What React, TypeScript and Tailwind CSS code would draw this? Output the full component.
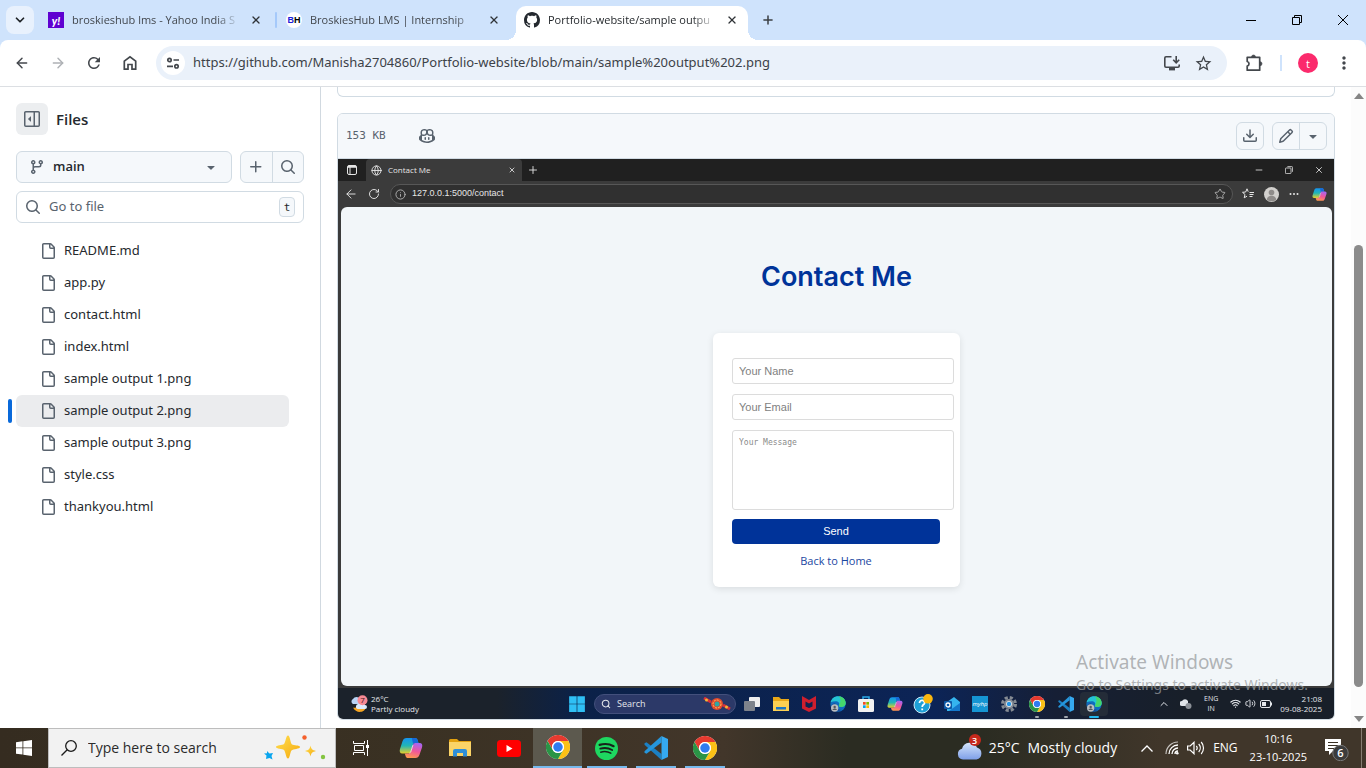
import React from "react";
import {
  ArrowLeft,
  ArrowRight,
  ChevronDown,
  ChevronUp,
  Globe,
  Info,
  Minus,
  Plus,
  RotateCw,
  Search,
  Star,
  Volume2,
  Wifi,
  X,
} from "lucide-react";
import { MdMoreVert, MdRefresh, MdStarBorder } from "react-icons/md";

type IconProps = { className?: string };

/* ---------- Octicons ---------- */

function Oct({ d, className = "size-4" }: { d: string; className?: string }) {
  return (
    <svg viewBox="0 0 16 16" fill="currentColor" className={`shrink-0 ${className}`} aria-hidden="true">
      <path d={d} />
    </svg>
  );
}

const oct = {
  sidebar:
    "m4.177 7.823 2.396-2.396A.25.25 0 0 1 7 5.604v4.792a.25.25 0 0 1-.427.177L4.177 8.177a.25.25 0 0 1 0-.354ZM0 1.75C0 .784.784 0 1.75 0h12.5C15.216 0 16 .784 16 1.75v12.5A1.75 1.75 0 0 1 14.25 16H1.75A1.75 1.75 0 0 1 0 14.25Zm1.75-.25a.25.25 0 0 0-.25.25v12.5c0 .138.112.25.25.25H9.5v-13Zm12.5 13a.25.25 0 0 0 .25-.25V1.75a.25.25 0 0 0-.25-.25H11v13Z",
  file: "M2 1.75C2 .784 2.784 0 3.75 0h6.586c.464 0 .909.184 1.237.513l2.914 2.914c.329.328.513.773.513 1.237v9.586A1.75 1.75 0 0 1 13.25 16h-9.5A1.75 1.75 0 0 1 2 14.25Zm1.75-.25a.25.25 0 0 0-.25.25v12.5c0 .138.112.25.25.25h9.5a.25.25 0 0 0 .25-.25V6h-2.75A1.75 1.75 0 0 1 9 4.25V1.5Zm6.75.062V4.25c0 .138.112.25.25.25h2.688l-.011-.013-2.914-2.914-.013-.011Z",
  branch:
    "M9.5 3.25a2.25 2.25 0 1 1 3 2.122V6A2.5 2.5 0 0 1 10 8.5H6a1 1 0 0 0-1 1v1.128a2.251 2.251 0 1 1-1.5 0V5.372a2.25 2.25 0 1 1 1.5 0v1.836A2.493 2.493 0 0 1 6 7h4a1 1 0 0 0 1-1v-.628A2.25 2.25 0 0 1 9.5 3.25Zm-6 0a.75.75 0 1 0 1.5 0 .75.75 0 0 0-1.5 0Zm8.25-.75a.75.75 0 1 0 0 1.5.75.75 0 0 0 0-1.5ZM4.25 12a.75.75 0 1 0 0 1.5.75.75 0 0 0 0-1.5Z",
  search:
    "M10.68 11.74a6 6 0 0 1-7.922-8.982 6 6 0 0 1 8.982 7.922l3.04 3.04a.749.749 0 0 1-.326 1.275.749.749 0 0 1-.734-.215ZM11.5 7a4.499 4.499 0 1 0-8.997 0A4.499 4.499 0 0 0 11.5 7Z",
  plus: "M7.75 2a.75.75 0 0 1 .75.75V7h4.25a.75.75 0 0 1 0 1.5H8.5v4.25a.75.75 0 0 1-1.5 0V8.5H2.75a.75.75 0 0 1 0-1.5H7V2.75A.75.75 0 0 1 7.75 2Z",
  triangle: "m4.427 7.427 3.396 3.396a.25.25 0 0 0 .354 0l3.396-3.396A.25.25 0 0 0 11.396 7H4.604a.25.25 0 0 0-.177.427Z",
  download:
    "M2.75 14A1.75 1.75 0 0 1 1 12.25v-2.5a.75.75 0 0 1 1.5 0v2.5c0 .138.112.25.25.25h10.5a.25.25 0 0 0 .25-.25v-2.5a.75.75 0 0 1 1.5 0v2.5A1.75 1.75 0 0 1 13.25 14ZM7.25 7.689V2a.75.75 0 0 1 1.5 0v5.689l1.97-1.969a.749.749 0 1 1 1.06 1.06l-3.25 3.25a.749.749 0 0 1-1.06 0L4.22 6.78a.749.749 0 1 1 1.06-1.06l1.97 1.969Z",
  pencil:
    "M11.013 1.427a1.75 1.75 0 0 1 2.474 0l1.086 1.086a1.75 1.75 0 0 1 0 2.474l-8.61 8.61c-.21.21-.47.364-.756.445l-3.251.93a.75.75 0 0 1-.927-.928l.929-3.25c.081-.286.235-.547.445-.758l8.61-8.61Zm.176 4.823L9.75 4.81l-6.286 6.287a.253.253 0 0 0-.064.108l-.558 1.953 1.953-.558a.253.253 0 0 0 .108-.064Zm1.238-3.763a.25.25 0 0 0-.354 0L10.811 3.75l1.439 1.44 1.263-1.263a.25.25 0 0 0 0-.354Z",
  copilot:
    "M7.998 15.035c-4.562 0-7.873-2.914-7.998-3.749V9.338c.085-.628.677-1.686 1.588-2.065.013-.07.024-.143.036-.218.029-.183.06-.384.126-.612-.201-.508-.254-1.084-.254-1.656 0-.87.128-1.769.693-2.484.579-.733 1.494-1.124 2.724-1.261 1.206-.134 2.262.034 2.944.765.05.053.096.108.139.165.044-.057.094-.112.143-.165.682-.731 1.738-.899 2.944-.765 1.23.137 2.145.528 2.724 1.261.566.715.693 1.614.693 2.484 0 .572-.053 1.148-.254 1.656.066.228.098.429.126.612.012.076.024.148.037.218.924.385 1.522 1.471 1.591 2.095v1.872c0 .766-3.351 3.795-8.002 3.795Zm0-1.485c2.28 0 4.584-1.11 5.002-1.433V7.862l-.023-.116c-.49.21-1.075.291-1.727.291-1.146 0-2.059-.327-2.71-.991A3.222 3.222 0 0 1 8 6.303a3.24 3.24 0 0 1-.544.743c-.65.664-1.563.991-2.71.991-.652 0-1.236-.081-1.727-.291l-.023.116v4.255c.419.323 2.722 1.433 5.002 1.433ZM6.762 2.83c-.193-.206-.637-.413-1.682-.297-1.019.113-1.479.404-1.713.7-.247.312-.369.789-.369 1.554 0 .793.129 1.171.308 1.371.162.181.519.379 1.442.379.853 0 1.339-.235 1.638-.54.315-.322.527-.827.617-1.553.117-.935-.037-1.395-.241-1.614Zm4.155-.297c-1.044-.116-1.488.091-1.681.297-.204.219-.359.679-.242 1.614.091.726.303 1.231.618 1.553.299.305.784.54 1.638.54.922 0 1.28-.198 1.442-.379.179-.2.308-.578.308-1.371 0-.765-.123-1.242-.37-1.554-.233-.296-.693-.587-1.713-.7ZM6.25 9.037a.75.75 0 0 1 .75.75v1.501a.75.75 0 0 1-1.5 0V9.787a.75.75 0 0 1 .75-.75Zm4.25.75v1.501a.75.75 0 0 1-1.5 0V9.787a.75.75 0 0 1 1.5 0Z",
  github:
    "M8 0c4.42 0 8 3.58 8 8a8.013 8.013 0 0 1-5.45 7.59c-.4.08-.55-.17-.55-.38 0-.27.01-1.13.01-2.2 0-.75-.25-1.23-.54-1.48 1.78-.2 3.65-.88 3.65-3.95 0-.88-.31-1.59-.82-2.15.08-.2.36-1.02-.08-2.12 0 0-.67-.22-2.2.82-.64-.18-1.32-.27-2-.27-.68 0-1.36.09-2 .27-1.53-1.03-2.2-.82-2.2-.82-.44 1.1-.16 1.92-.08 2.12-.51.56-.82 1.28-.82 2.15 0 3.06 1.86 3.75 3.64 3.95-.23.2-.44.55-.51 1.07-.46.21-1.61.55-2.33-.66-.15-.24-.6-.83-1.23-.82-.67.01-.27.38.01.53.34.19.73.9.82 1.13.16.45.68 1.31 2.69.94 0 .67.01 1.3.01 1.49 0 .21-.15.45-.55.38A7.995 7.995 0 0 1 0 8c0-4.42 3.58-8 8-8Z",
};

/* ---------- Application logos ---------- */

function ChromeLogo({ className }: IconProps) {
  return (
    <svg viewBox="0 0 48 48" className={className} aria-hidden="true">
      <circle cx="24" cy="24" r="24" fill="#fff" />
      <path d="M24 12h20.800A24 24 0 0 0 3.200 12l10.400 18A12 12 0 0 1 24 12z" fill="#e53a2f" />
      <path d="M34.400 30 24 48A24 24 0 0 0 44.800 12H24a12 12 0 0 1 10.400 18z" fill="#fbc116" />
      <path d="M13.600 30 3.200 12A24 24 0 0 0 24 48l10.400-18a12 12 0 0 1-20.800 0z" fill="#2a9446" />
      <circle cx="24" cy="24" r="12" fill="#fff" />
      <circle cx="24" cy="24" r="9.500" fill="#2f7cf0" />
    </svg>
  );
}

function CopilotLogo({ className }: IconProps) {
  return (
    <svg viewBox="0 0 24 22" className={className} aria-hidden="true">
      <defs>
        <linearGradient id="cpBlue" x1="0" y1="0" x2="0" y2="1">
          <stop offset="0" stopColor="#1593f0" />
          <stop offset=".5" stopColor="#22b6b4" />
          <stop offset="1" stopColor="#e8d02a" />
        </linearGradient>
        <linearGradient id="cpPink" x1=".6" y1="0" x2=".3" y2="1">
          <stop offset="0" stopColor="#a765f0" />
          <stop offset=".5" stopColor="#f0569a" />
          <stop offset="1" stopColor="#ff9a4d" />
        </linearGradient>
      </defs>
      <path d="M7.500 1h8.500c1.500 0 2.200.8 2.600 2.100L19.500 6h-3.200c-1.300 0-2 .8-2.400 2.100L12 14.200c-.5 1.500-1.300 2.300-2.800 2.300H3.400C1 16.500.2 14.500 1 12L3.600 4C4.300 2 5.600 1 7.500 1z" fill="url(#cpBlue)" />
      <path d="M12.800 1H16c1.500 0 2.200.8 2.600 2.100L19.500 6h-3.200c-1 0-1.700.5-2.100 1.300z" fill="#1668d8" />
      <path d="M16.500 21H9.200c-1.500 0-2.200-.8-2.600-2.100l-.8-2.400h3.400c1.500 0 2.300-.8 2.800-2.300l1.900-6.100c.4-1.300 1.100-2.100 2.400-2.100h4.300c2.400 0 3.200 2 2.400 4.500l-2.600 7.500c-.7 2-2 3-3.900 3z" fill="url(#cpPink)" />
      <path d="M13.900 8.100 12 14.200c-.3 1-.8 1.700-1.500 2" stroke="#fff" strokeOpacity=".75" strokeWidth="1" fill="none" />
    </svg>
  );
}

function FolderLogo({ className }: IconProps) {
  return (
    <svg viewBox="0 0 22 20" className={className} aria-hidden="true">
      <path d="M0 2.500Q0 1 1.500 1H8l2 2h12v15H0z" fill="#e3a10f" />
      <path d="M0 4h22v14H0z" fill="#fbd467" />
      <path d="M4 18.500V13q0-2 2-2h10q2 0 2 2v5.500h-4V15H8v3.500z" fill="#2f8fd8" />
    </svg>
  );
}

function YouTubeLogo({ className }: IconProps) {
  return (
    <svg viewBox="0 0 24 17" className={className} aria-hidden="true">
      <rect width="24" height="17" rx="3.500" fill="#f00" />
      <path d="M9.500 5v7l6-3.500z" fill="#fff" />
    </svg>
  );
}

function SpotifyLogo({ className }: IconProps) {
  return (
    <svg viewBox="0 0 24 24" className={className} aria-hidden="true">
      <circle cx="12" cy="12" r="12" fill="#1ed760" />
      <g fill="none" stroke="#17241b" strokeLinecap="round">
        <path d="M4.800 8.200c4.800-1.400 10.600-.9 14.600 1.400" strokeWidth="2.300" />
        <path d="M5.500 12.200c4.200-1.200 8.800-.7 12.400 1.300" strokeWidth="1.900" />
        <path d="M6 15.800c3.700-1 7.400-.6 10.500 1.100" strokeWidth="1.600" />
      </g>
    </svg>
  );
}

function CodeLogo({ className }: IconProps) {
  return (
    <svg viewBox="0 0 24 24" className={className} aria-hidden="true">
      <path d="M17.500 18 2.500 6.300.5 7.300v1.400L17.500 24z" fill="#1b80c4" />
      <path d="M17.500 0 .5 15.300v1.400l2 1L17.500 6.500z" fill="#2596dc" />
      <path d="M17.500 0 24 3v18l-6.500 3z" fill="#35a9f0" />
    </svg>
  );
}

function EdgeLogo({ className }: IconProps) {
  return (
    <svg viewBox="0 0 24 24" className={className} aria-hidden="true">
      <circle cx="12" cy="12" r="11.500" fill="#0f6cbd" />
      <path d="M1 9.500C2.500 3.500 7 .5 12 .5c7 0 11.500 5 11.500 10 0 4-3 6-6.500 6-3 0-4.500-1-3.500-2.500 1.500-3-1-6-5-6-3 0-5.500.5-7.500 1.500z" fill="#25c4d4" />
      <path d="M13 .5c6.500.5 10.500 5 10.500 10 0 4-3 6-6.500 6-3 0-4.500-1-3.500-2.500C16 10 17 4 13 .5z" fill="#45d66b" />
      <path d="M8 11c-2 6 3 10 9 9.500-5 4-13 2.500-15-4 0-3 2-5.500 6-5.500z" fill="#164a98" />
      <circle cx="7" cy="18" r="5.500" fill="#b8bcc0" />
      <circle cx="7" cy="16.500" r="1.800" fill="#53585e" />
      <path d="M3.800 21c.5-3 5.900-3 6.400 0z" fill="#53585e" />
    </svg>
  );
}

function WindowsLogo({ className }: IconProps) {
  return (
    <svg viewBox="0 0 16 16" className={className} fill="#fff" aria-hidden="true">
      <path d="M0 2.200 6.500 1.300v6.200H0zM7.300 1.200 16 0v7.500H7.300zM0 8.300h6.500v6.300L0 13.700zM7.300 8.300H16V16l-8.700-1.200z" />
    </svg>
  );
}

function TaskViewIcon({ className }: IconProps) {
  return (
    <svg viewBox="0 0 17 16" className={className} fill="none" stroke="#fff" aria-hidden="true">
      <path d="M.5 1v2.500h11V1M.5 15v-2.500h11V15M1.500 5.500h9v5h-9zM14.500 0v16" />
      <path d="M13 5h3v3h-3z" fill="#fff" stroke="none" />
    </svg>
  );
}

function CloudLogo({ className }: IconProps) {
  return (
    <svg viewBox="0 0 26 24" className={className} aria-hidden="true">
      <defs>
        <linearGradient id="cloudFill" x1="0" y1="0" x2="0" y2="1">
          <stop offset="0" stopColor="#d4e4fb" />
          <stop offset="1" stopColor="#7e9fe8" />
        </linearGradient>
      </defs>
      <path d="M6 23.500a5.500 5.500 0 0 1-1-10.800 8 8 0 0 1 15-1.200 6.200 6.200 0 0 1-.5 12z" fill="url(#cloudFill)" />
    </svg>
  );
}

function SparkleArt({ className }: IconProps) {
  return (
    <svg viewBox="0 0 64 28" className={className} aria-hidden="true">
      <defs>
        <linearGradient id="spark" x1="0" y1="0" x2="1" y2="1">
          <stop offset="0" stopColor="#ffdf52" />
          <stop offset="1" stopColor="#f5a90c" />
        </linearGradient>
      </defs>
      <path d="M25 1.500c2 0 2.500 8 4 9s8 .5 8 2.500-7 2-8.500 3.500-1.500 8-3.500 8-2.500-7-4-8.500-8-1-8-3 6.500-1.500 8-3 2-8.500 4-8.500z" fill="url(#spark)" />
      <path d="M47.500 11.500c.8 3.500 1.500 4.500 5.500 5.500-4 1-4.700 2-5.500 5.500-.8-3.500-1.500-4.500-5.500-5.500 4-1 4.700-2 5.500-5.500z" fill="url(#spark)" />
      <path d="m4 17 2.500 2.500L10 19l-1.500 3 1 3.500-3-1.500L3 25l.5-3.500L1 19.500l3-.3z" fill="#0aa5ee" />
      <circle cx="41.500" cy="3.500" r="2.200" fill="#f4602c" />
      <circle cx="60" cy="23" r="2.200" fill="#83c440" />
    </svg>
  );
}

/* ---------- Browser chrome ---------- */

function TabTitle({ children }: { children: React.ReactNode }) {
  return (
    <span className="min-w-0 flex-1 overflow-hidden text-[11px] whitespace-nowrap [mask-image:linear-gradient(to_right,black_86%,transparent)]">
      {children}
    </span>
  );
}

function CloseTab() {
  return (
    <button aria-label="Close tab" className="grid size-4 shrink-0 place-items-center text-[#2f3337]">
      <X className="size-3" strokeWidth={2.600} />
    </button>
  );
}

function TabStrip() {
  return (
    <div className="flex h-10 items-start bg-[#cfe3fc] pt-[6px] pl-[6px]">
      <button aria-label="Search tabs" className="mr-[6px] grid size-7 shrink-0 place-items-center rounded-lg bg-[#e8f1fd] text-[#1f2327]">
        <ChevronDown className="size-3.5" strokeWidth={3} />
      </button>
      <div className="flex gap-[6px]">
        <div className="relative flex h-7 w-[232px] items-center gap-2 px-2 text-[#42474d]">
          <span className="grid size-4 shrink-0 place-items-center bg-[#5f01d1] font-['Lato'] text-[11px] leading-none font-black text-white italic">y!</span>
          <TabTitle>broskieshub lms - Yahoo India S</TabTitle>
          <CloseTab />
          <span className="absolute top-[6px] -right-[5px] h-4 w-0.5 rounded bg-[#a5c9fa]" />
        </div>
        <div className="flex h-7 w-[232px] items-center gap-2 px-2 text-[#42474d]">
          <span className="grid size-4 shrink-0 place-items-center overflow-hidden rounded-full bg-white font-['Liberation_Sans'] text-[9px] leading-none font-bold text-black">
            <span>
              <span className="text-[#1c1cd8]">B</span>H
            </span>
          </span>
          <TabTitle>BroskiesHub LMS | Internship</TabTitle>
          <CloseTab />
        </div>
        <div className="relative flex h-[34px] w-[232px] items-start rounded-t-[10px] bg-white text-[#1f2327]">
          <span className="absolute bottom-0 -left-2.5 size-2.5 bg-[radial-gradient(circle_at_0_0,transparent_10px,white_10px)]" />
          <span className="absolute -right-2.5 bottom-0 size-2.5 bg-[radial-gradient(circle_at_100%_0,transparent_10px,white_10px)]" />
          <div className="flex h-7 w-full items-center gap-2 px-2">
            <Oct d={oct.github} className="size-4 text-[#24292f]" />
            <TabTitle>Portfolio-website/sample outpu</TabTitle>
            <CloseTab />
          </div>
        </div>
      </div>
      <button aria-label="New tab" className="ml-3 grid h-7 w-4 place-items-center text-[#3c4043]">
        <Plus className="size-3.5" strokeWidth={2.600} />
      </button>
      <div className="ml-auto flex h-7 text-black">
        <button aria-label="Minimize" className="grid w-[46px] place-items-center">
          <span className="h-px w-2.5 bg-black" />
        </button>
        <button aria-label="Restore" className="grid w-[46px] place-items-center">
          <svg viewBox="0 0 10 10" className="size-2.5" fill="none" stroke="currentColor">
            <path d="M.5 2.500h7v7h-7zM2.500 2.500v-2h7v7h-2" />
          </svg>
        </button>
        <button aria-label="Close" className="grid w-[46px] place-items-center">
          <svg viewBox="0 0 10 10" className="size-2.5" fill="none" stroke="currentColor">
            <path d="m0 0 10 10M10 0 0 10" />
          </svg>
        </button>
      </div>
    </div>
  );
}

function TuneIcon() {
  return (
    <svg viewBox="0 0 14 14" className="size-3.5" fill="none" stroke="#43474c" strokeWidth="1.700" aria-hidden="true">
      <circle cx="3.500" cy="4" r="1.700" />
      <path d="M7.500 4H13M1 10.300h6" />
      <circle cx="10.500" cy="10.300" r="1.700" />
    </svg>
  );
}

function InstallIcon() {
  return (
    <svg viewBox="0 0 16 16" className="size-4" fill="none" stroke="currentColor" strokeWidth="1.600" aria-hidden="true">
      <path d="M7.500 1.800H2Q.8 1.800.8 3v8q0 1.200 1.200 1.200h12q1.200 0 1.200-1.200V9.500" />
      <path d="M12.200 1v6M9.200 4.800l3 3 3-3" />
      <path d="M5 14.200h6" strokeWidth="2.400" />
    </svg>
  );
}

function ExtensionIcon() {
  return (
    <svg viewBox="0 0 18 18" className="size-[18px]" fill="none" stroke="currentColor" strokeWidth="1.700" strokeLinejoin="round" aria-hidden="true">
      <path d="M2.200 3.300h12.500v12.900H2.200v-4.200a2.300 2.300 0 0 0 0-4.500z" />
      <path d="M6.500 3a2 2 0 0 1 4 0zM15 7.700a2 2 0 0 1 0 4z" fill="currentColor" strokeWidth=".6" />
    </svg>
  );
}

function AddressBar() {
  return (
    <div className="bg-[#cfe3fc]">
      <div className="flex h-[47px] items-center rounded-t-lg border-b border-[#dcdfe3] bg-white pr-3 pl-3 text-[#43474c]">
        <div className="flex gap-4">
          <button aria-label="Back" className="grid size-5 place-items-center">
            <ArrowLeft className="size-4" strokeWidth={2.200} />
          </button>
          <button aria-label="Forward" className="grid size-5 place-items-center text-[#aeb1b5]">
            <ArrowRight className="size-4" strokeWidth={2.200} />
          </button>
          <button aria-label="Reload" className="grid size-5 place-items-center">
            <MdRefresh className="size-[18px]" />
          </button>
          <button aria-label="Home" className="grid size-5 place-items-center">
            <svg viewBox="0 0 16 16" className="size-4" fill="none" stroke="currentColor" strokeWidth="1.700" aria-hidden="true">
              <path d="M2.300 6.200 8 1.800l5.700 4.400v8H10V9.500H6v4.700H2.300z" />
            </svg>
          </button>
        </div>
        <div className="ml-4 flex h-[34px] min-w-0 flex-1 items-center rounded-full bg-[#eaf1fa] pr-5 pl-[5px]">
          <button aria-label="View site information" className="grid size-6 shrink-0 place-items-center rounded-full bg-white">
            <TuneIcon />
          </button>
          <input
            aria-label="Address"
            defaultValue="https://github.com/Manisha2704860/Portfolio-website/blob/main/sample%20output%202.png"
            className="ml-2 min-w-0 flex-1 bg-transparent font-['Noto_Sans'] text-[13px] text-[#3c4248] outline-none"
          />
          <button aria-label="Install app" className="mr-3.5 shrink-0">
            <InstallIcon />
          </button>
          <button aria-label="Bookmark this tab" className="-mr-1.5 shrink-0">
            <MdStarBorder className="size-[19px]" />
          </button>
        </div>
        <button aria-label="Extensions" className="ml-[15px] grid size-6 place-items-center">
          <ExtensionIcon />
        </button>
        <span className="ml-3.5 h-4 w-0.5 bg-[#cfe3fc]" />
        <button aria-label="Profile" className="ml-4 grid size-5 place-items-center rounded-full bg-[#fb2a6c] text-[11px] leading-none text-white">
          t
        </button>
        <button aria-label="Browser menu" className="ml-4 grid size-5 place-items-center">
          <MdMoreVert className="size-5" />
        </button>
      </div>
    </div>
  );
}

/* ---------- Repository sidebar ---------- */

const files = [
  "README.md",
  "app.py",
  "contact.html",
  "index.html",
  "sample output 1.png",
  "sample output 2.png",
  "sample output 3.png",
  "style.css",
  "thankyou.html",
];

function Sidebar() {
  return (
    <aside className="w-[321px] shrink-0 border-r border-[#d1d9e0] p-4 text-[#25292e]">
      <div className="flex items-center gap-2">
        <button aria-label="Collapse file tree" className="grid size-8 place-items-center rounded-md bg-[#eceef0] text-[#59636e]">
          <Oct d={oct.sidebar} />
        </button>
        <h2 className="text-[15px] font-semibold">Files</h2>
      </div>
      <div className="mt-4 flex gap-2">
        <button className="flex h-8 flex-1 items-center rounded-md border border-[#d1dbe3] bg-[#f5f8fb] px-3 text-[13px] font-semibold text-[#25292e]">
          <Oct d={oct.branch} className="mr-2 size-4 text-[#59636e]" />
          main
          <Oct d={oct.triangle} className="ml-auto size-4 text-[#59636e]" />
        </button>
        <div className="flex h-8 w-16 divide-x divide-[#d1dbe3] rounded-md border border-[#d1dbe3] bg-[#f5f8fb] text-[#59636e]">
          <button aria-label="Add file" className="grid flex-1 place-items-center">
            <Oct d={oct.plus} />
          </button>
          <button aria-label="Search this repository" className="grid flex-1 place-items-center">
            <Oct d={oct.search} />
          </button>
        </div>
      </div>
      <div className="mt-2 flex h-8 items-center rounded-md border border-[#d1dbe3] px-2 text-[#59636e]">
        <Oct d={oct.search} />
        <input
          aria-label="Go to file"
          placeholder="Go to file"
          className="ml-2 min-w-0 flex-1 font-['Noto_Sans'] text-[13px] outline-none placeholder:text-[#59636e]"
        />
        <kbd className="grid h-5 w-4 place-items-center rounded border border-[#d1dbe3] bg-[#f5f8fb] font-['DejaVu_Sans_Mono'] text-[11px] leading-none text-[#25292e]">
          t
        </kbd>
      </div>
      <nav aria-label="Files" className="mt-3 mr-[15px]">
        <ul>
          {files.map((name) => {
            const active = name === "sample output 2.png";
            return (
              <li key={name} className="relative">
                {active && <span className="absolute top-1 -left-2 h-6 w-1 rounded-full bg-[#0969da]" />}
                <a
                  href="#"
                  aria-current={active ? "page" : undefined}
                  className={`flex h-8 items-center gap-2 rounded-md pl-6 font-['Noto_Sans'] text-[13px] ${active ? "bg-[#ebecee]" : ""}`}
                >
                  <Oct d={oct.file} className="size-4 text-[#59636e]" />
                  {name}
                </a>
              </li>
            );
          })}
        </ul>
      </nav>
    </aside>
  );
}

/* ---------- Captured desktop shown in the preview ---------- */

function ContactForm() {
  return (
    <form className="flex w-[247px] flex-col rounded-md bg-white pt-[25px] pr-5 pb-[18px] pl-[19px] shadow-[0_2px_7px_rgba(0,0,0,0.1)]">
      <input
        aria-label="Your Name"
        placeholder="Your Name"
        className="h-[26px] w-[222px] rounded-[3px] border border-[#dcdcdc] px-1.5 font-['Liberation_Sans'] text-[11px] placeholder:text-[#7f7f7f]"
      />
      <input
        aria-label="Your Email"
        placeholder="Your Email"
        className="mt-2.5 h-[26px] w-[222px] rounded-[3px] border border-[#dcdcdc] px-1.5 font-['Liberation_Sans'] text-[11px] placeholder:text-[#7f7f7f]"
      />
      <textarea
        aria-label="Your Message"
        placeholder="Your Message"
        className="mt-2.5 h-20 w-[222px] resize-none rounded-[3px] border border-[#dcdcdc] px-1.5 py-1.5 font-['DejaVu_Sans_Mono'] text-[8px] placeholder:text-[#8a8a8a]"
      />
      <button type="button" className="mt-[9px] h-[25px] rounded bg-[#003399] font-['Liberation_Sans'] text-[11px] text-white">
        Send
      </button>
      <a href="#" className="mt-[9px] text-center text-[11px] leading-4 text-[#1a479f]">
        Back to Home
      </a>
    </form>
  );
}

function CapturedBrowser() {
  return (
    <div className="flex min-h-0 flex-1 flex-col bg-[#3b3b3b] text-[#e6e6e6]">
      <div className="flex h-[22px] shrink-0 items-center bg-[#202020]">
        <span className="grid h-full w-7 place-items-center">
          <svg viewBox="0 0 10 10" className="size-2.5" fill="none" stroke="currentColor">
            <rect x=".5" y=".5" width="9" height="9" rx="1.500" />
            <path d="M1 1.800h8" strokeWidth="2" />
            <path d="M3 2v7" />
          </svg>
        </span>
        <div className="flex h-full w-[156px] items-center rounded-t bg-[#3b3b3b] pr-1.5 pl-[5px] text-[8px]">
          <Globe className="mr-1.5 size-[11px]" />
          Contact Me
          <X className="ml-auto size-2" strokeWidth={2.500} />
        </div>
        <Plus className="ml-[5px] size-3" strokeWidth={1.800} />
        <div className="ml-auto flex items-center gap-[21px] pr-[10px]">
          <Minus className="size-[10px]" />
          <svg viewBox="0 0 10 10" className="size-2" fill="none" stroke="currentColor">
            <rect x=".5" y="2.500" width="7" height="7" rx="1" />
            <path d="M3 .8h5.500a1 1 0 0 1 1 1v5.500" />
          </svg>
          <X className="size-2.5" />
        </div>
      </div>
      <div className="flex h-[26px] shrink-0 items-center pr-[7px] pl-1.5">
        <ArrowLeft className="size-3.5" strokeWidth={1.600} />
        <RotateCw className="ml-2.5 size-3" strokeWidth={1.900} />
        <div className="ml-2.5 flex h-5 min-w-0 flex-1 items-center rounded-full border border-[#575757] bg-[#303030] pr-1.5 pl-1 text-[9px]">
          <Info className="mr-1.5 size-[11px] text-[#b5b5b5]" />
          <span className="font-['Liberation_Sans']">127.0.0.1:5000/contact</span>
          <Star className="ml-auto size-3 text-[#b5b5b5]" strokeWidth={1.800} />
        </div>
        <svg viewBox="0 0 12 12" className="ml-[9px] size-3" fill="none" stroke="currentColor" aria-hidden="true">
          <path d="m5 .8 1.200 2.900M5 .8 3.700 4l-3.200.3L3 6.500 2.200 9.800 5 8.200M7.500 4.500H12M7.500 6.500h4M7.500 8.500h3" />
        </svg>
        <svg viewBox="0 0 16 16" className="ml-2.5 size-[15px]" aria-hidden="true">
          <circle cx="8" cy="8" r="8" fill="#d2d0cd" />
          <circle cx="8" cy="5.800" r="3" fill="#8f8c8a" />
          <path d="M3 13.500c0-5.500 10-5.500 10 0-3 2.300-7 2.300-10 0z" fill="#8f8c8a" />
        </svg>
        <svg viewBox="0 0 10 10" className="ml-2.5 size-2.5" fill="currentColor" aria-hidden="true">
          <circle cx="1.500" cy="5" r="1" />
          <circle cx="5" cy="5" r="1" />
          <circle cx="8.500" cy="5" r="1" />
        </svg>
        <CopilotLogo className="ml-[13px] size-[15px]" />
      </div>
      <div className="mr-0.5 mb-0.5 ml-[3px] flex min-h-0 flex-1 flex-col items-center rounded-md bg-[#f2f6f9] pt-[50px]">
        <h1 className="mb-9 font-['Inter'] text-[27px] leading-10 font-semibold text-[#003399]">Contact Me</h1>
        <ContactForm />
      </div>
    </div>
  );
}

function Slot({ children, label, mark }: { children: React.ReactNode; label: string; mark?: "idle" | "active" }) {
  return (
    <span title={label} className={`relative grid h-6 w-7 place-items-center rounded ${mark === "active" ? "bg-[#242c38]" : ""}`}>
      {children}
      {mark && (
        <span className={`absolute -bottom-0.5 h-0.5 rounded ${mark === "active" ? "w-2.5 bg-[#22b8f0]" : "w-1 bg-[#a0a6ae]"}`} />
      )}
    </span>
  );
}

function CapturedTaskbar() {
  return (
    <div className="grid h-[31px] shrink-0 grid-cols-[1fr_auto_1fr] items-center bg-[linear-gradient(to_right,#1b222b_0%,#1b222b_16%,#0b2148_24%,#0c2456_60%,#161f35_72%,#181f29_85%)] text-[8px] text-[#e4e7eb]">
      <div className="flex items-center gap-[3px] pl-3">
        <svg viewBox="0 0 18 18" className="size-[18px]" aria-hidden="true">
          <path d="M3 12.500c3 1 5-1 5-3.500l8 3c-1 6-10 7-13 .5z" fill="#f6a623" />
          <path d="M3 9a2.800 2.800 0 0 1 0-5 4 4 0 0 1 7 0v5z" fill="#b9d4f5" />
          <path d="M8 14a2.500 2.500 0 0 1 1-5 3.500 3.500 0 0 1 6 1 2 2 0 0 1 0 4z" fill="#dcebfd" />
          <circle cx="12.500" cy="5.300" r="5" fill="#f88a94" />
          <text x="12.500" y="8.200" textAnchor="middle" fontSize="8" fill="#40151b">7</text>
        </svg>
        <div className="leading-[10px]">
          <div>26°C</div>
          <div>Partly cloudy</div>
        </div>
      </div>
      <div className="flex items-center pl-1">
        <svg viewBox="0 0 16 16" className="mr-2 size-[18px]" fill="#2fc0f5" aria-hidden="true">
          <path d="M1 1h6.700v6.700H1zM8.300 1H15v6.700H8.300zM1 8.300h6.700V15H1zM8.300 8.300H15V15H8.300z" />
        </svg>
        <div className="flex h-5 w-[142px] items-center rounded-full border border-[#43507c] bg-[#2c3968] pr-1 pl-1.5 text-[9px]">
          <Search className="mr-1.5 size-2.5" strokeWidth={2.500} />
          Search
          <svg viewBox="0 0 28 14" className="ml-auto h-3.5 w-7" aria-hidden="true">
            <path d="M1 1 8 5M20 8l7 4" stroke="#d8313a" strokeWidth="3" />
            <circle cx="3.500" cy="3" r="1.500" fill="#f7b733" />
            <circle cx="23.500" cy="10" r="1.500" fill="#f7b733" />
            <circle cx="14" cy="7" r="6" fill="#e3482d" />
            <circle cx="14" cy="7" r="4" fill="none" stroke="#ffc45c" strokeDasharray="2 1" />
            <circle cx="14" cy="7" r="2.500" fill="#2fa8a3" />
          </svg>
        </div>
        <div className="ml-0.5 flex w-[370px] justify-between">
          <Slot label="Task view">
            <svg viewBox="0 0 16 14" className="size-4" aria-hidden="true">
              <rect x="5" width="11" height="10" rx="1" fill="#eee" />
              <rect y="4" width="11" height="10" rx="1" fill="#7e838b" />
            </svg>
          </Slot>
          <Slot label="Files">
            <svg viewBox="0 0 16 14" className="size-4" aria-hidden="true">
              <path d="M0 0h6l2 2h8v12H0z" fill="#e9a818" />
              <path d="M0 4h16v10H0z" fill="#fcd052" />
              <path d="M3 10h10v2.500H3z" fill="#1b75c4" />
            </svg>
          </Slot>
          <Slot label="Antivirus">
            <svg viewBox="0 0 14 16" className="h-4 w-3.5" aria-hidden="true">
              <path d="m0 0 7 4 7-4v12.500L7 16l-7-3.500zM3.500 5.500v5L7 12l3.500-1.500v-5L7 7.500z" fill="#cf1f2e" fillRule="evenodd" />
            </svg>
          </Slot>
          <Slot label="Edge">
            <EdgeLogo className="size-4" />
          </Slot>
          <Slot label="Store">
            <svg viewBox="0 0 16 16" className="size-4" aria-hidden="true">
              <path d="M5 4V1h6v3" fill="none" stroke="#2aa9e8" strokeWidth="1.500" />
              <rect y="3" width="16" height="13" rx="1.500" fill="#f1f1f1" />
              <path d="M5 6h2.700v2.700H5z" fill="#f25022" />
              <path d="M8.300 6H11v2.700H8.300z" fill="#7fba00" />
              <path d="M5 9.300h2.700V12H5z" fill="#00a4ef" />
              <path d="M8.300 9.300H11V12H8.300z" fill="#ffb900" />
            </svg>
          </Slot>
          <Slot label="Copilot">
            <CopilotLogo className="size-4" />
          </Slot>
          <Slot label="Help">
            <svg viewBox="0 0 20 20" className="size-5" aria-hidden="true">
              <circle cx="9" cy="11" r="8" fill="#1e9fd6" stroke="#cfeaf7" />
              <path d="M6.500 9c0-4 6-3 5 .3-.6 1.400-2.300 1.500-2.300 3.700m0 1.500v1.800" fill="none" stroke="#fff" strokeWidth="1.800" />
              <circle cx="15" cy="4.800" r="4.800" fill="#fbb80f" />
            </svg>
          </Slot>
          <Slot label="Outlook">
            <svg viewBox="0 0 16 16" className="size-4" aria-hidden="true">
              <path d="m3 6 7-5 6 5v9H3z" fill="#35b5ef" />
              <path d="m5 15 11-8v8z" fill="#1479cc" />
              <rect y="5" width="8" height="8" rx="1" fill="#0d5aa8" />
              <circle cx="4" cy="9" r="2" fill="none" stroke="#fff" strokeWidth="1.300" />
            </svg>
          </Slot>
          <Slot label="myHP">
            <span className="grid size-4 place-items-center bg-[#1595d3] text-[6px] leading-none text-white italic">myhp</span>
          </Slot>
          <Slot label="Settings">
            <svg viewBox="0 0 16 16" className="size-4" aria-hidden="true">
              <circle cx="8" cy="8" r="6.500" fill="none" stroke="#858b93" strokeWidth="3" strokeDasharray="3.100 2" />
              <circle cx="8" cy="8" r="5" fill="#858b93" />
              <circle cx="8" cy="8" r="2.700" fill="#2496e8" stroke="#d6dade" />
            </svg>
          </Slot>
          <Slot label="Chrome" mark="idle">
            <ChromeLogo className="size-4" />
          </Slot>
          <Slot label="Code" mark="idle">
            <CodeLogo className="size-4" />
          </Slot>
          <Slot label="Edge" mark="active">
            <EdgeLogo className="size-4" />
          </Slot>
        </div>
      </div>
      <div className="flex items-center justify-end pr-3">
        <ChevronUp className="size-3" />
        <svg viewBox="0 0 12 10" className="ml-2.5 h-2.5 w-3" aria-hidden="true">
          <path d="M2 7a2.500 2.500 0 0 1 0-5 3.500 3.500 0 0 1 6 0v5z" fill="#dfe3e8" />
          <circle cx="8.500" cy="7" r="3" fill="#8b9097" />
        </svg>
        <div className="ml-3 text-center text-[7px] leading-[10px]">
          ENG
          <br />
          IN
        </div>
        <Wifi className="ml-3 size-[11px]" strokeWidth={2.500} />
        <Volume2 className="ml-1 size-[11px]" />
        <svg viewBox="0 0 12 8" className="ml-1 h-2 w-3" aria-hidden="true">
          <rect x=".5" y=".5" width="10" height="7" rx="1.500" fill="none" stroke="#e4e7eb" />
          <path d="M2 2h4v4H2zM11 2.500h1v3h-1z" fill="#e4e7eb" />
        </svg>
        <div className="ml-2 text-right leading-[10px]">
          21:08
          <br />
          09-08-2025
        </div>
      </div>
    </div>
  );
}

function FileView() {
  return (
    <main className="flex min-w-0 flex-1 flex-col px-4 pb-2">
      <div className="h-2.5 shrink-0 rounded-b-md border border-t-0 border-[#d1dbe3]" />
      <section className="mt-4 flex min-h-0 flex-1 flex-col overflow-hidden rounded-md border border-[#d1dbe3]">
        <header className="flex h-[45px] shrink-0 items-center border-b border-[#d1dbe3] bg-[#f5f8fb] pr-[7px] pl-2 text-[#59636e]">
          <span className="font-['DejaVu_Sans_Mono'] text-[11px]">153 KB</span>
          <button aria-label="Copilot" className="ml-[33px]">
            <Oct d={oct.copilot} />
          </button>
          <button aria-label="Download raw file" className="ml-auto grid size-7 place-items-center rounded-md border border-[#d1dbe3]">
            <Oct d={oct.download} />
          </button>
          <div className="ml-2 flex h-7 w-[55px] divide-x divide-[#d1dbe3] rounded-md border border-[#d1dbe3]">
            <button aria-label="Edit this file" className="grid flex-1 place-items-center">
              <Oct d={oct.pencil} />
            </button>
            <button aria-label="More edit options" className="grid flex-1 place-items-center">
              <Oct d={oct.triangle} />
            </button>
          </div>
        </header>
        <CapturedBrowser />
        <CapturedTaskbar />
      </section>
    </main>
  );
}

function PageScrollbar() {
  return (
    <div className="flex w-[15px] shrink-0 flex-col items-center bg-[#fcfcfc] py-1.5" aria-hidden="true">
      <svg viewBox="0 0 10 6" className="h-1.5 w-2.5" fill="#858585">
        <path d="M5 0 10 6H0z" />
      </svg>
      <div className="mt-[146px] mb-[29px] w-[9px] flex-1 rounded-full bg-[#8b8b8b]" />
      <svg viewBox="0 0 10 6" className="h-1.5 w-2.5" fill="#858585">
        <path d="M0 0h10L5 6z" />
      </svg>
    </div>
  );
}

/* ---------- Desktop taskbar ---------- */

function AppButton({ label, children, state }: { label: string; children: React.ReactNode; state?: "open" | "focused" }) {
  const look =
    state === "focused" ? "bg-[#5c594e] border-b-2 border-[#76b9ed]" : "";
  return (
    <button aria-label={label} className={`relative grid h-10 w-[49px] place-items-center ${look}`}>
      {children}
      {state === "open" && <span className="absolute bottom-0 h-0.5 w-10 bg-[#76b9ed]" />}
    </button>
  );
}

function Taskbar() {
  return (
    <footer className="flex h-10 shrink-0 items-center bg-[linear-gradient(to_right,#352c20_0%,#3a3123_30%,#42362a_53%,#2b2c22_62%,#2b2c22_72%,#40362a_85%,#40362a_100%)] text-white">
      <button aria-label="Start" className="grid h-10 w-12 place-items-center">
        <WindowsLogo className="size-4" />
      </button>
      <div className="mr-px flex h-10 w-[288px] items-center border border-[#bdbdbd] bg-[#f2f2f2] pr-2 pl-3 text-black">
        <svg viewBox="0 0 16 16" className="size-4" fill="none" stroke="#1b1b1b" strokeWidth="1.300" aria-hidden="true">
          <circle cx="10" cy="6" r="5.300" />
          <path d="M6.200 9.800.5 15.500" />
        </svg>
        <input
          aria-label="Type here to search"
          placeholder="Type here to search"
          className="ml-[11px] min-w-0 flex-1 text-sm outline-none placeholder:text-[#2b2b2b]"
        />
        <SparkleArt className="h-7 w-16" />
      </div>
      <div className="flex">
        <AppButton label="Task view">
          <TaskViewIcon className="h-4 w-[17px]" />
        </AppButton>
        <AppButton label="Copilot">
          <CopilotLogo className="size-6" />
        </AppButton>
        <AppButton label="File Explorer">
          <FolderLogo className="size-[22px]" />
        </AppButton>
        <AppButton label="YouTube">
          <YouTubeLogo className="w-6" />
        </AppButton>
        <AppButton label="Chrome" state="focused">
          <ChromeLogo className="size-6" />
        </AppButton>
        <AppButton label="Spotify" state="open">
          <SpotifyLogo className="size-[23px]" />
        </AppButton>
        <AppButton label="Visual Studio Code" state="open">
          <CodeLogo className="size-6" />
        </AppButton>
        <AppButton label="Chrome profile" state="open">
          <ChromeLogo className="size-6" />
        </AppButton>
      </div>
      <div className="ml-auto flex h-10 items-center">
        <span className="relative mr-[6px]">
          <CloudLogo className="h-6 w-[26px]" />
          <span className="absolute -top-0.5 left-3 grid size-3 place-items-center rounded-full bg-[#c5281c] text-[9px] leading-none font-semibold">3</span>
        </span>
        <span className="text-sm whitespace-pre">25°C</span>
        <span className="ml-2 text-sm">Mostly cloudy</span>
        <svg viewBox="0 0 12 7" className="ml-6 h-[7px] w-3" fill="none" stroke="currentColor" strokeWidth="1.300" aria-hidden="true">
          <path d="m.5 6.500 5.500-5.500 5.500 5.500" />
        </svg>
        <svg viewBox="0 0 14 14" className="ml-3 size-3.5" fill="none" stroke="currentColor" aria-hidden="true">
          <path d="M1 13A12 12 0 0 1 13 1" opacity=".7" strokeWidth="1.200" />
          <path d="M4 13A9 9 0 0 1 13 4M7 13a6 6 0 0 1 6-6M10 13a3 3 0 0 1 3-3" strokeWidth="1.300" />
          <circle cx="12.300" cy="12.300" r="1.300" fill="currentColor" stroke="none" />
        </svg>
        <svg viewBox="0 0 18 14" className="ml-2 h-3.5 w-[18px]" fill="none" stroke="currentColor" strokeWidth="1.200" aria-hidden="true">
          <path d="M.6 5h2.600L7 1.300v11.400L3.200 9H.6zM9.300 5a3 3 0 0 1 0 4M11.700 3a6 6 0 0 1 0 8M14.200 1a9 9 0 0 1 0 12" />
        </svg>
        <span className="ml-2 text-xs">ENG</span>
        <div className="ml-3 text-center text-[11px] leading-[18px]">
          <div>10:16</div>
          <div>23-10-2025</div>
        </div>
        <button aria-label="Notifications" className="relative ml-[18px] h-[26px] w-6">
          <svg viewBox="0 0 24 26" className="h-[26px] w-6" aria-hidden="true">
            <path d="M0 4h16v12H8l-4 4v-4H0z" fill="#fff" />
            <path d="M3 7.500h10M3 10.500h10M3 13.500h6" stroke="#3a3124" />
            <circle cx="15.500" cy="18" r="7.700" fill="#3c3c3c" stroke="#777" />
            <text x="15.500" y="22" textAnchor="middle" fontSize="11" fontWeight="600" fill="#fff">6</text>
          </svg>
        </button>
        <span className="mr-1 ml-3 h-10 w-px bg-[#857d72]" />
      </div>
    </footer>
  );
}

export default function App() {
  return (
    <div className="relative flex h-screen flex-col overflow-hidden bg-white font-['Open_Sans','Noto_Sans',sans-serif]">
      <TabStrip />
      <AddressBar />
      <div className="flex min-h-0 flex-1">
        <Sidebar />
        <FileView />
        <PageScrollbar />
      </div>
      <Taskbar />
      <div className="pointer-events-none absolute right-[58px] bottom-[73px] font-['Noto_Sans'] text-[#9a9da0]/75">
        <div className="text-[19px] leading-[26px]">Activate Windows</div>
        <div className="text-sm leading-5">Go to Settings to activate Windows.</div>
      </div>
    </div>
  );
}
